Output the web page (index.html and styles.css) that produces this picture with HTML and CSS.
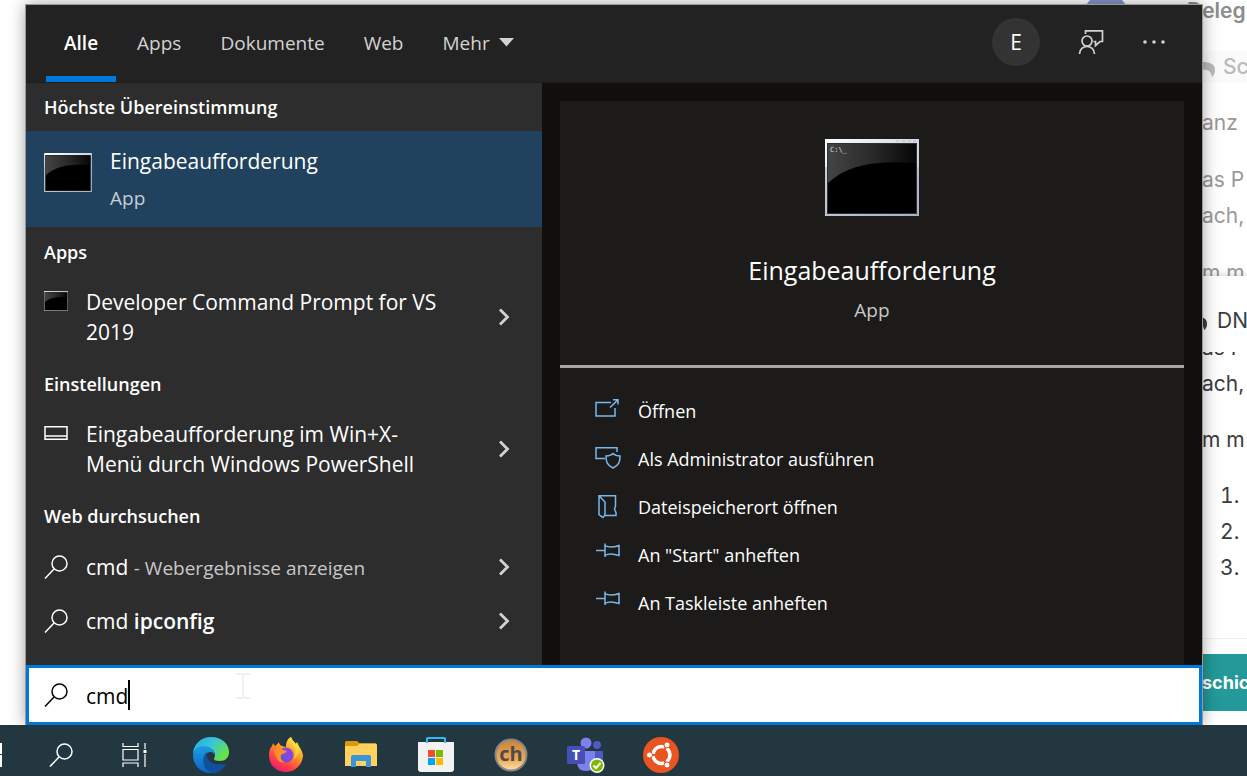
FILE: index.html
```html
<!DOCTYPE html>
<html lang="de">
<head>
    <meta charset="utf-8">
    <title>Suche</title>
    <link rel="stylesheet" href="styles.css">
</head>
<body>
    <!-- shared icons -->
    <svg class="sprite" aria-hidden="true">
        <defs>
            <linearGradient id="cmdFrame" x1="0" y1="0" x2="1" y2="1">
                <stop offset="0" stop-color="#fff"/>
                <stop offset="0.5" stop-color="#d5dae2"/>
                <stop offset="1" stop-color="#aab6c4"/>
            </linearGradient>
            <linearGradient id="cmdGloss" x1="0" y1="0" x2="1" y2="0">
                <stop offset="0" stop-color="#444"/>
                <stop offset="0.5" stop-color="#2a2a2a"/>
                <stop offset="1" stop-color="#060606"/>
            </linearGradient>
        </defs>
        <symbol id="cmd" viewBox="0 0 94 77">
            <rect width="94" height="77" fill="url(#cmdFrame)"/>
            <path d="M1 28V76H93V28" fill="none" stroke="#a3afbd" stroke-width="1"/>
            <rect x="2" y="4" width="90" height="71" fill="#2c3138"/>
            <rect x="3" y="5" width="88" height="69" fill="#000"/>
            <path d="M3 5H91V24C50 21 22 26 3 44Z" fill="url(#cmdGloss)"/>
            <path d="M71 2h3M77 2h3M83 2h3M88 2h3" stroke="#b4b9c0" stroke-width="1"/>
        </symbol>
        <symbol id="lens" viewBox="0 0 24 24">
            <circle cx="15.500" cy="8.500" r="7.500" fill="none" stroke="currentColor" stroke-width="1.500"/>
            <path d="M10 14L1 23.500" fill="none" stroke="currentColor" stroke-width="1.500"/>
        </symbol>
        <symbol id="chevron" viewBox="0 0 12 18">
            <path d="M2 1.500L9.500 9L2 16.500" fill="none" stroke="currentColor" stroke-width="2.800"/>
        </symbol>
        <symbol id="pin" viewBox="0 0 26 24">
            <path d="M1 7.500h9M10 .5v13.500M10 2.500c3 2 8 2 14 0v10c-6-2-11-2-14 0" fill="none" stroke="currentColor" stroke-width="1.500"/>
        </symbol>
        <symbol id="reply" viewBox="0 0 22 18">
            <path d="M0 7L8 0v3c8 0 14 1 14 8 0 3-1 5-3 7-1-6-4-8-11-7v4Z" fill="currentColor"/>
        </symbol>
    </svg>

    <main class="desktop">
        <!-- forum page behind the search window -->
        <section class="forum">
            <span class="avatar"></span>
            <div class="preview">
                <p class="author">Deleg</p>
                <p class="reply">
                    <svg width="22" height="18"><use href="#reply"/></svg>
                    <span>Sc</span>
                </p>
                <p class="line">anz</p>
                <p class="text">as P<br>ach,</p>
                <p class="line">m m</p>
            </div>
            <div class="composer">
                <p class="topic">
                    <svg width="20" height="18"><use href="#reply"/></svg>
                    <span>DN</span>
                </p>
                <div class="editor">
                    <p class="cut"><span>as P</span></p>
                    <p class="line">ach,</p>
                    <p class="line spaced">m m</p>
                    <ol>
                        <li></li>
                        <li></li>
                        <li></li>
                    </ol>
                </div>
                <div class="actions">
                    <button type="button" class="send">schic</button>
                </div>
            </div>
        </section>

        <section class="search-window">
            <header class="topbar">
                <nav class="tabs">
                    <button type="button" class="tab active">Alle</button>
                    <button type="button" class="tab">Apps</button>
                    <button type="button" class="tab">Dokumente</button>
                    <button type="button" class="tab">Web</button>
                    <button type="button" class="tab">Mehr
                        <svg width="15" height="9" viewBox="0 0 15 9"><path d="M0 0H15L7.500 8.500Z" fill="#d2d2d2"/></svg>
                    </button>
                </nav>
                <div class="tools">
                    <button type="button" class="user">E</button>
                    <button type="button" class="tool" aria-label="Feedback">
                        <svg width="26" height="26" viewBox="0 0 26 26" fill="none" stroke="currentColor" stroke-width="1.700">
                            <circle cx="9" cy="12" r="5"/>
                            <path d="M1.500 25c0-10 15-10 15 0M7.500 5V1.800H24.500V12.500H22L17.500 16.500V12.500H15.500"/>
                        </svg>
                    </button>
                    <button type="button" class="tool" aria-label="Optionen">
                        <svg width="24" height="6" viewBox="0 0 24 6" fill="currentColor">
                            <circle cx="3" cy="3" r="1.800"/><circle cx="12" cy="3" r="1.800"/><circle cx="21" cy="3" r="1.800"/>
                        </svg>
                    </button>
                </div>
            </header>

            <div class="columns">
                <div class="results">
                    <h2>Höchste Übereinstimmung</h2>
                    <button type="button" class="best">
                        <svg width="48" height="39"><use href="#cmd"/></svg>
                        <span class="best-text">
                            <span class="name">Eingabeaufforderung</span>
                            <span class="kind">App</span>
                        </span>
                    </button>

                    <h2>Apps</h2>
                    <button type="button" class="result tall">
                        <svg class="icon" width="24" height="20"><use href="#cmd"/></svg>
                        <span class="name">Developer Command Prompt for VS 2019</span>
                        <svg class="chevron" width="12" height="18"><use href="#chevron"/></svg>
                    </button>

                    <h2>Einstellungen</h2>
                    <button type="button" class="result tall">
                        <svg class="icon" width="24" height="20" viewBox="0 0 24 20" fill="none" stroke="#fff" stroke-width="1.500"><path d="M1 3.700H23V16.200H1ZM1 13H23"/></svg>
                        <span class="name">Eingabeaufforderung im Win+X-<br>Menü durch Windows PowerShell</span>
                        <svg class="chevron" width="12" height="18"><use href="#chevron"/></svg>
                    </button>

                    <h2>Web durchsuchen</h2>
                    <button type="button" class="result">
                        <svg class="icon" width="24" height="24"><use href="#lens"/></svg>
                        <span class="name">cmd <small>- Webergebnisse anzeigen</small></span>
                        <svg class="chevron" width="12" height="18"><use href="#chevron"/></svg>
                    </button>
                    <button type="button" class="result">
                        <svg class="icon" width="24" height="24"><use href="#lens"/></svg>
                        <span class="name">cmd <b>ipconfig</b></span>
                        <svg class="chevron" width="12" height="18"><use href="#chevron"/></svg>
                    </button>
                </div>

                <div class="detail">
                    <div class="card">
                        <div class="card-head">
                            <svg width="94" height="77" viewBox="0 0 94 77">
                                <use href="#cmd"/>
                                <text x="5" y="13" class="prompt">C:\_</text>
                            </svg>
                            <h1>Eingabeaufforderung</h1>
                            <p>App</p>
                        </div>
                        <ul class="commands">
                            <li><button type="button">
                                <svg width="26" height="24" viewBox="0 0 26 24"><path d="M16 3.500H1V17H20V9M15 8.500L23 .8M18 .8H23V5.500" /></svg>
                                Öffnen
                            </button></li>
                            <li><button type="button">
                                <svg width="26" height="24" viewBox="0 0 26 24"><path d="M10 11.500H1V.8H22V5M18 6.500c-2 2-4 2.500-7 2.500 0 6 1 9 7 12 6-3 7-6 7-12-3 0-5-.5-7-2.500Z"/></svg>
                                Als Administrator ausführen
                            </button></li>
                            <li><button type="button">
                                <svg width="26" height="24" viewBox="0 0 26 24"><path d="M9 20.500H21V17.500l-1.500-3L20.500 11V.8H4V19.500l4 3c1.500-1 2-2 2-4V7L4 .8"/></svg>
                                Dateispeicherort öffnen
                            </button></li>
                            <li><button type="button">
                                <svg width="26" height="24"><use href="#pin"/></svg>
                                An "Start" anheften
                            </button></li>
                            <li><button type="button">
                                <svg width="26" height="24"><use href="#pin"/></svg>
                                An Taskleiste anheften
                            </button></li>
                        </ul>
                    </div>
                </div>
            </div>

            <label class="search-box">
                <svg width="24" height="24"><use href="#lens"/></svg>
                <input type="text" value="cmd" aria-label="Suche">
                <span class="caret"></span>
                <svg class="pointer" width="14" height="26" viewBox="0 0 14 26"><path d="M0 1H5L7 2L9 1H14M7 2V24M0 25H5L7 24L9 25H14" fill="none" stroke="#f0f0f0" stroke-width="2"/></svg>
            </label>
        </section>
    </main>

    <footer class="taskbar">
        <button type="button" class="start" aria-label="Start">
            <svg width="2" height="24" viewBox="0 0 2 24"><path d="M0 0H2V11H0ZM0 12H2V24H0Z" fill="#fff"/></svg>
        </button>
        <button type="button" aria-label="Suchen">
            <svg width="24" height="24"><use href="#lens"/></svg>
        </button>
        <button type="button" aria-label="Taskansicht">
            <svg width="28" height="24" viewBox="0 0 28 24" fill="none" stroke="#fff" stroke-width="1.200"><path d="M1 0V3.500H16V0M1 6.500H16V17H1ZM1 24V20H16V24M23 0V6M23 11V24"/><path d="M21.500 7h3v3h-3z" fill="#fff" stroke="none"/></svg>
        </button>
        <button type="button" aria-label="Edge">
            <svg width="36" height="36" viewBox="0 0 36 36">
                <defs>
                    <linearGradient id="edgeTop" x1="0" y1="0" x2="1" y2=".6"><stop offset="0" stop-color="#2ba8e0"/><stop offset=".5" stop-color="#36c6d8"/><stop offset="1" stop-color="#6ae246"/></linearGradient>
                    <linearGradient id="edgeLeft" x1="0" y1="0" x2="0" y2="1"><stop offset="0" stop-color="#1b9de2"/><stop offset="1" stop-color="#0a63c4"/></linearGradient>
                </defs>
                <path d="M0 18C0 7 8 0 18 0c11 0 18 7 18 15 0 6-4 9-9 9-4 0-6-1-6-2s1-2 1-4c0-5-5-8-11-8C5 10 1 13 0 18Z" fill="url(#edgeTop)"/>
                <path d="M0 18c1-6 5-9 11-9 6 0 11 4 11 9-2-4-8-4-10 1-2 6 1 13 10 17-13 2-22-7-22-18Z" fill="url(#edgeLeft)"/>
                <path d="M14 15c-2 7 5 14 17 12 1-.2 2 .3 1.500 1.200C29 33 25 36 20 36 10 34 7 21 14 15Z" fill="#11509b"/>
            </svg>
        </button>
        <button type="button" aria-label="Firefox">
            <svg width="36" height="36" viewBox="0 0 36 36">
                <defs>
                    <linearGradient id="fox" x1=".8" y1="0" x2=".2" y2="1"><stop offset="0" stop-color="#fff44f"/><stop offset=".4" stop-color="#ff9a25"/><stop offset=".7" stop-color="#ff4540"/><stop offset="1" stop-color="#e5127d"/></linearGradient>
                    <linearGradient id="globe" x1="1" y1="0" x2="0" y2="1"><stop offset="0" stop-color="#a03de8"/><stop offset="1" stop-color="#5a55d8"/></linearGradient>
                </defs>
                <path d="M18 35C8 35 1 28 1 18c0-4 1-7 3-9l1-3 2 3c2-1 3-3 4-4 0 2 1 3 3 4l4 1c0-4 1-8 5-10 1 4 4 6 6 9l1-1c4 5 5 9 5 11-1 9-8 16-17 16Z" fill="url(#fox)"/>
                <circle cx="18" cy="18" r="7.500" fill="url(#globe)"/>
                <path d="M7 12c3-2 6-1 8 1l4 1c-1 3-5 2-6 4-1 4 1 6 4 7-4 1-8-1-9-5-2-3-2-6-1-8Z" fill="#ff8f2a"/>
                <path d="M23 0c-2 5 3 8 4 12 1 3 0 7-1 10 6-5 6-13 3-17-1 1-1 2-1 2-1-2-4-4-5-7Z" fill="#ffd83f"/>
            </svg>
        </button>
        <button type="button" aria-label="Explorer">
            <svg width="32" height="28" viewBox="0 0 32 28">
                <path d="M0 1.500Q0 0 1.500 0H12L15 2.500H31V6H0Z" fill="#dc9a07"/>
                <path d="M0 5H12L15 2.500H30.500Q32 2.500 32 4V25H0Z" fill="#ffd25e"/>
                <path d="M6 26V16Q6 14 8 14H24Q26 14 26 16V26H21V20H11V26Z" fill="#3c95d8"/>
            </svg>
        </button>
        <button type="button" aria-label="Store">
            <svg width="36" height="36" viewBox="0 0 36 36">
                <path d="M0 5H36V32Q36 35 33 35H3Q0 35 0 32Z" fill="#f2f2f2"/>
                <path d="M9 7V2.500Q9 2 9.500 2H26.500Q27 2 27 2.500V7" transform="translate(0 -1)" fill="none" stroke="#2db9f3" stroke-width="2"/>
                <path d="M10 13h7v7h-7z" fill="#f25022"/><path d="M18 13h7v7h-7z" fill="#7fba00"/>
                <path d="M10 21h7v7h-7z" fill="#00a4ef"/><path d="M18 21h7v7h-7z" fill="#ffb900"/>
            </svg>
        </button>
        <button type="button" aria-label="Chocolatey">
            <svg width="34" height="34" viewBox="0 0 34 34">
                <defs><linearGradient id="choc" x1="0" y1="0" x2="0" y2="1"><stop offset="0" stop-color="#c58439"/><stop offset=".6" stop-color="#eca64f"/><stop offset="1" stop-color="#ffe0a4"/></linearGradient></defs>
                <circle cx="17" cy="17" r="15.500" fill="url(#choc)" stroke="#85878c" stroke-width="2"/>
                <text x="17" y="23" class="ch">ch</text>
            </svg>
        </button>
        <button type="button" aria-label="Teams">
            <svg width="38" height="36" viewBox="0 0 38 36">
                <circle cx="30" cy="8" r="4" fill="#4f58c4"/>
                <path d="M24 14H36V24Q36 30 29 30H24Z" fill="#4f58c4"/>
                <circle cx="19" cy="6" r="5.500" fill="#7b83eb"/>
                <path d="M10 14H28V25Q28 34 19 34T10 25Z" fill="#7b83eb"/>
                <rect x="0" y="9" width="18" height="18" rx="1.500" fill="#454fb5"/>
                <text x="9" y="23" class="t">T</text>
                <circle cx="30" cy="28.500" r="7.500" fill="#fff"/>
                <circle cx="30" cy="28.500" r="6" fill="#7fba00"/>
                <path d="M26.500 28.500L29 31L33.500 26" fill="none" stroke="#fff" stroke-width="2"/>
            </svg>
        </button>
        <button type="button" aria-label="Ubuntu">
            <svg width="36" height="36" viewBox="0 0 36 36">
                <circle cx="18" cy="18" r="18" fill="#e95420"/>
                <circle cx="18.500" cy="18" r="8.500" fill="none" stroke="#fff" stroke-width="3.500"/>
                <path d="M18.500 18H4M18.500 18L25 6M18.500 18L25 30" stroke="#e95420" stroke-width="2"/>
                <g fill="#fff" stroke="#e95420" stroke-width="1"><circle cx="6.500" cy="18" r="3"/><circle cx="24" cy="8" r="3"/><circle cx="24" cy="28" r="3"/></g>
            </svg>
        </button>
    </footer>
</body>
</html>
```
FILE: styles.css
```css
* {
    box-sizing: border-box;
}

body {
    margin: 0;
    height: 100vh;
    display: flex;
    flex-direction: column;
    overflow: hidden;
    background: #fff;
    font-family: "Open Sans", "Noto Sans", sans-serif;
    font-size: 18px;
}

h1, h2, p, ul, ol {
    margin: 0;
    padding: 0;
    font-weight: 400;
}

button {
    margin: 0;
    padding: 0;
    border: 0;
    background: none;
    color: inherit;
    font: inherit;
    text-align: left;
}

svg {
    flex: none;
}

.sprite {
    position: absolute;
    width: 0;
    height: 0;
}

.desktop {
    position: relative;
    flex: 1;
    min-height: 0;
    overflow: hidden;
}

/* forum page in the background */
.forum {
    position: relative;
    height: 100%;
    width: 60px;
    margin-left: auto;
    display: flex;
    flex-direction: column;
    font-family: Inter, sans-serif;
    font-size: 21px;
    line-height: 36px;
    white-space: nowrap;
    color: #3c3c3c;
}

.avatar {
    position: absolute;
    top: -7px;
    right: 119px;
    width: 44px;
    height: 44px;
    border-radius: 50%;
    background: #8295c8;
}

.preview {
    height: 276px;
    overflow: hidden;
    color: #999;
}

.line,
.text,
.cut {
    padding-left: 15px;
}

.author {
    height: 29px;
    line-height: 22px;
    font-weight: 600;
    color: #8c8c8c;
}

.reply {
    height: 54px;
    margin-top: 22px;
    padding-left: 6px;
    display: flex;
    gap: 8px;
    line-height: 32px;
    font-weight: 500;
    color: #bbb;
    background: linear-gradient(#fafafa 32px, transparent 32px);
}

.reply svg {
    margin-top: 8px;
}

.preview .text {
    margin: 21px 0;
}

.composer {
    flex: 1;
    display: flex;
    flex-direction: column;
    background: #fff;
    box-shadow: 0 -2px 6px rgba(0, 0, 0, 0.15);
}

.topic {
    height: 74px;
    padding-top: 27px;
    display: flex;
    gap: 10px;
}

.topic svg {
    margin-top: 10px;
}

.editor {
    flex: 1;
    border-bottom: 1px solid #eee;
}

/* line scrolled under the composer head */
.cut {
    height: 4px;
    margin: 2px 0 10px;
    overflow: hidden;
    display: flex;
    align-items: flex-end;
    line-height: 16px;
}

.spaced {
    margin: 20px 0;
}

ol {
    padding-left: 58px;
}

.actions {
    height: 86px;
    padding: 15px 0;
}

.send {
    width: 100%;
    height: 57px;
    padding-left: 15px;
    background: #239999;
    color: #fff;
    font-size: 18px;
    font-weight: 700;
}

/* search window */
.search-window {
    position: absolute;
    inset: 5px 45px 0 26px;
    display: flex;
    flex-direction: column;
    color: #fff;
    box-shadow: 0 0 0 1px #999, 0 0 16px rgba(0, 0, 0, 0.4);
}

.topbar {
    height: 78px;
    display: flex;
    justify-content: space-between;
    padding: 0 36px 0 20px;
    background: #222;
    border-bottom: 1px solid #1c1c1c;
}

.tabs {
    display: flex;
    gap: 3px;
    font-size: 19px;
}

.tab {
    padding: 4px 18px 0;
    border-bottom: 6px solid transparent;
    color: #d2d2d2;
}

.tab.active {
    border-color: #0078d7;
    color: #fff;
    font-weight: 600;
}

.tab svg {
    margin-left: 4px;
    vertical-align: 3px;
}

.tools {
    display: flex;
    align-items: center;
    gap: 38px;
    padding-bottom: 3px;
    color: #d2d2d2;
}

.user {
    width: 48px;
    height: 48px;
    border-radius: 50%;
    background: #333;
    color: #fff;
    font-size: 21px;
    text-align: center;
}

.tool {
    display: flex;
}

.columns {
    flex: 1;
    min-height: 0;
    display: grid;
    grid-template-columns: 516fr 660fr;
}

.results {
    background: #2d2d2d;
}

.results h2 {
    padding: 0 18px;
    font-size: 18px;
    line-height: 48px;
    font-weight: 600;
}

.name {
    font-size: 21px;
    line-height: 30px;
}

.best {
    width: 100%;
    height: 97px;
    display: flex;
    align-items: flex-start;
    gap: 18px;
    padding: 22px 18px 0;
    border-bottom: 1px solid #2d2d2d;
    background: #20425e;
}

.best-text {
    display: flex;
    flex-direction: column;
    margin-top: -7px;
}

.kind {
    margin-top: 8px;
    font-size: 19px;
    line-height: 28px;
    color: #c4ced6;
}

.result {
    width: 100%;
    height: 54px;
    display: flex;
    align-items: center;
    padding: 0 32px 0 18px;
}

.result.tall {
    height: 84px;
    padding-bottom: 2px;
}

.result .icon {
    margin-right: 18px;
}

.result.tall .icon {
    align-self: flex-start;
    margin-top: 15px;
}

.result .name {
    flex: 1;
    padding-right: 50px;
}

.result small {
    font-size: 19px;
    color: #c8c8c8;
}

.result b {
    font-weight: 600;
}

.chevron {
    color: #d2d2d2;
}

.detail {
    padding: 18px 18px 0;
    background: #100f0e;
}

.card {
    height: 100%;
    background: #1c1b1a;
}

.card-head {
    padding: 38px 0 41px;
    border-bottom: 3px solid #a8a5a5;
    text-align: center;
}

.card-head svg {
    display: block;
    margin: 0 auto;
}

.card h1 {
    margin-top: 34px;
    font-size: 25px;
    line-height: 40px;
}

.card-head p {
    margin-top: 6px;
    font-size: 19px;
    line-height: 28px;
    color: #c8c8c8;
}

.commands {
    padding: 19px 35px;
    list-style: none;
}

.commands button {
    height: 48px;
    display: flex;
    align-items: center;
    gap: 17px;
}

.commands svg {
    color: #76b9ed;
    fill: none;
    stroke: #76b9ed;
    stroke-width: 1.5;
}

.prompt {
    fill: #ddd;
    font: 7px "DejaVu Sans Mono", monospace;
}

.search-box {
    position: relative;
    height: 60px;
    display: flex;
    align-items: center;
    padding: 0 15px;
    border: 3px solid #0078d7;
    background: #fff;
    color: #000;
}

.search-box input {
    field-sizing: content;
    margin-left: 18px;
    padding: 2px 0 0;
    border: 0;
    outline: 0;
    background: none;
    color: #000;
    font: inherit;
    font-size: 21px;
    caret-color: transparent;
}

.caret {
    width: 2px;
    height: 30px;
    background: #000;
}

/* mouse pointer over the text box */
.pointer {
    position: absolute;
    top: 5px;
    left: 207px;
}

.taskbar {
    height: 51px;
    display: flex;
    padding-top: 8px;
    background: #22373f;
    color: #fff;
}

.taskbar button {
    width: 75px;
    display: flex;
    align-items: center;
    justify-content: center;
}

.taskbar .start {
    width: 23px;
    justify-content: flex-start;
}

.taskbar .ch,
.taskbar .t {
    text-anchor: middle;
    font-weight: 700;
}

.ch {
    fill: #4d4b4e;
    font-size: 20px;
}

.t {
    fill: #fff;
    font-size: 14px;
}
```
